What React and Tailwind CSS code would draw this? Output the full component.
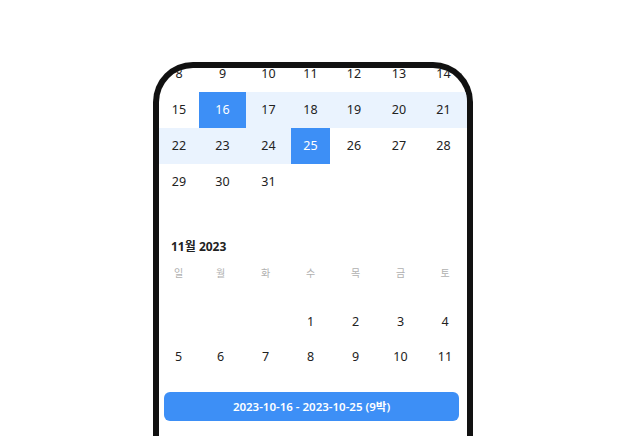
import React from "react";

const octRows = [
  [8, 9, 10, 11, 12, 13, 14],
  [15, 16, 17, 18, 19, 20, 21],
  [22, 23, 24, 25, 26, 27, 28],
  [29, 30, 31, null, null, null, null],
];
const novRows = [
  [null, null, null, 1, 2, 3, 4],
  [5, 6, 7, 8, 9, 10, 11],
];
const weekdays = ["일", "월", "화", "수", "목", "금", "토"];

function inRange(d) {
  return d !== null && d >= 16 && d <= 25;
}

export default function App() {
  return (
    <div
      className="w-[626px] h-[436px] bg-white overflow-hidden"
      style={{ fontFamily: '"Noto Sans", "Noto Sans CJK KR", sans-serif' }}
    >
      <div className="mt-[62px] ml-[153px] w-[320px] h-[390px] border-[6px] border-b-0 border-[#111111] rounded-t-[40px] overflow-hidden bg-white">
        <div className="-mt-[12px]">
          {octRows.map((row, ri) => (
            <div
              key={ri}
              className="grid grid-cols-[40px_47px_45px_39px_48px_42px_47px] h-[36px]"
            >
              {row.map((d, ci) => {
                const edge = d === 16 || d === 25;
                const band = inRange(d) && !edge;
                return (
                  <div
                    key={ci}
                    className={
                      "flex items-center justify-center text-[12.5px] " +
                      (edge
                        ? "bg-[#3d8ff6] text-white"
                        : band
                        ? "bg-[#eaf3fe] text-[#222222]"
                        : "text-[#222222]")
                    }
                  >
                    {d}
                  </div>
                );
              })}
            </div>
          ))}
          <div className="mt-[38px] pl-[12px] h-[18px] leading-[18px] text-[12px] font-bold text-[#222222]">
            11월 2023
          </div>
          <div className="mt-[9px] grid grid-cols-[39px_45px_45px_45px_45px_45px_44px] h-[16px]">
            {weekdays.map((w) => (
              <div
                key={w}
                className="flex items-center justify-center text-[10px] text-[#b0b0b0]"
              >
                {w}
              </div>
            ))}
          </div>
          <div className="mt-[24px]">
            {novRows.map((row, ri) => (
              <div
                key={ri}
                className="grid grid-cols-[39px_45px_45px_45px_45px_45px_44px] h-[35px]"
              >
                {row.map((d, ci) => (
                  <div
                    key={ci}
                    className="flex items-center justify-center text-[12.5px] text-[#222222]"
                  >
                    {d}
                  </div>
                ))}
              </div>
            ))}
          </div>
          <div className="mt-[17px] ml-[5px] mr-[8px] h-[29px] rounded-[6px] bg-[#3d8ff6] flex items-center justify-center text-white text-[11.5px] font-semibold">
            2023-10-16 - 2023-10-25 (9박)
          </div>
        </div>
      </div>
    </div>
  );
}
